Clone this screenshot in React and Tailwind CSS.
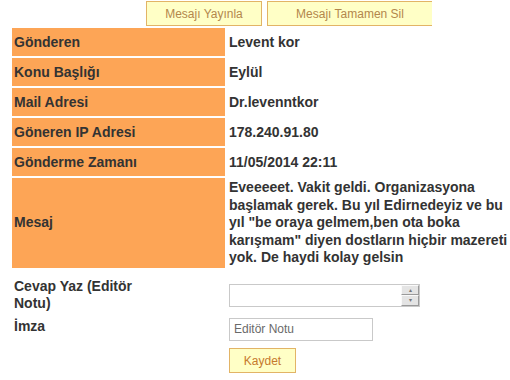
import React from 'react';

const satirlar = [
    { etiket: 'Gönderen', deger: 'Levent kor' },
    { etiket: 'Konu Başlığı', deger: 'Eylül' },
    { etiket: 'Mail Adresi', deger: 'Dr.levenntkor' },
    { etiket: 'Göneren IP Adresi', deger: '178.240.91.80' },
    { etiket: 'Gönderme Zamanı', deger: '11/05/2014 22:11' },
];

const mesaj = 'Eveeeeet. Vakit geldi. Organizasyona başlamak gerek. Bu yıl Edirnedeyiz ve bu yıl "be oraya gelmem,ben ota boka karışmam" diyen dostların hiçbir mazereti yok. De haydi kolay gelsin';

export default function App() {
    return (
        <div className="w-[510px] h-[380px] bg-white overflow-hidden text-[#333] font-['Liberation_Sans',Arial,sans-serif]">
            <div className="flex gap-[5px] pl-[146px] pt-[1px]">
                <button className="w-[116px] h-[25px] bg-[#ffffc6] border border-[#e2b466] text-[12px] text-[#b3874c]">Mesajı Yayınla</button>
                <button className="w-[165px] h-[25px] bg-[#ffffc6] border border-r-0 border-[#e2b466] text-[12px] text-[#b3874c]">Mesajı Tamamen Sil</button>
            </div>

            <div className="flex flex-col gap-[2px] pl-[12px] pt-[2px]">
                {satirlar.map((s) => (
                    <div key={s.etiket} className="flex gap-[4px]">
                        <div className="w-[213px] h-[28px] bg-[#fda556] pl-[2px] flex items-center text-[14px] font-bold">{s.etiket}</div>
                        <div className="w-[280px] h-[28px] flex items-center text-[14px] font-bold">{s.deger}</div>
                    </div>
                ))}
                <div className="flex gap-[4px]">
                    <div className="w-[213px] bg-[#fda556] pl-[2px] flex items-center text-[14px] font-bold">Mesaj</div>
                    <div className="w-[280px] text-[14px] font-bold leading-[17.5px] py-[1px]">{mesaj}</div>
                </div>
            </div>

            <div className="flex flex-col pl-[14px] pt-[10px]">
                <div className="flex items-start">
                    <div className="w-[215px]">
                        <div className="w-[140px] text-[14px] font-bold leading-[17.5px]">Cevap Yaz (Editör Notu)</div>
                    </div>
                    <div className="mt-[6px] w-[191px] h-[23px] flex border border-[#c9c9c9]">
                        <textarea className="flex-1 resize-none outline-none text-[12px] overflow-hidden" />
                        <div className="w-[18px] flex flex-col bg-[#e8e8e8]">
                            <div className="flex-1 border border-[#fafafa] border-b-[#9a9a9a] border-r-[#9a9a9a] bg-[#e4e4e4] flex items-center justify-center text-[6px] text-[#777] leading-none">▴</div>
                            <div className="flex-1 border border-[#fafafa] border-b-[#9a9a9a] border-r-[#9a9a9a] bg-[#e4e4e4] flex items-center justify-center text-[6px] text-[#777] leading-none">▾</div>
                        </div>
                    </div>
                </div>

                <div className="flex items-start mt-[5px]">
                    <div className="w-[215px] text-[14px] font-bold leading-[17.5px]">İmza</div>
                    <input defaultValue="Editör Notu" className="w-[144px] h-[23px] border border-[#c9c9c9] px-[4px] text-[12px] text-[#6a6a6a] outline-none" />
                </div>

                <div className="pl-[215px] mt-[7px]">
                    <button className="w-[67px] h-[25px] bg-[#ffffc6] border border-[#e2b466] text-[12px] text-[#c67a2e]">Kaydet</button>
                </div>
            </div>
        </div>
    );
}
